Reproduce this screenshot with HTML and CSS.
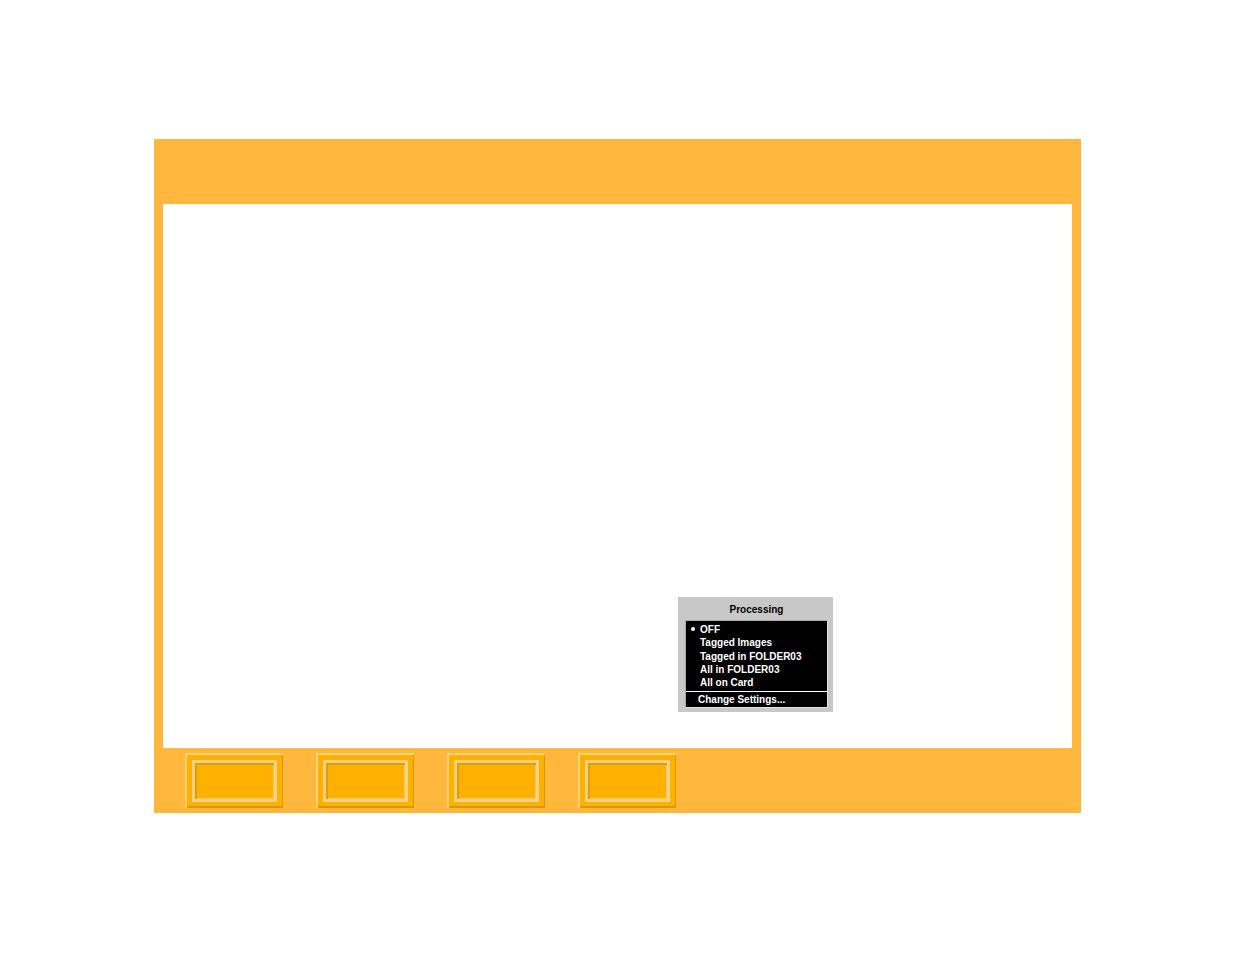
FILE: index.html
```html
<!DOCTYPE html>
<html>
<head>
<meta charset="utf-8">
<link rel="stylesheet" href="styles.css">
</head>
<body>
<div class="frame">
  <div class="header"></div>
  <div class="middle">
    <div class="side"></div>
    <div class="content">
      <div class="menu">
        <div class="menu-title">Processing</div>
        <div class="menu-box">
          <ul class="menu-list">
            <li class="selected">OFF</li>
            <li>Tagged Images</li>
            <li>Tagged in FOLDER03</li>
            <li>All in FOLDER03</li>
            <li>All on Card</li>
          </ul>
          <div class="menu-sep"></div>
          <div class="menu-action">Change Settings...</div>
        </div>
      </div>
    </div>
    <div class="side"></div>
  </div>
  <div class="footer">
    <div class="btn"><div class="btn-inner"></div></div>
    <div class="btn"><div class="btn-inner"></div></div>
    <div class="btn"><div class="btn-inner"></div></div>
    <div class="btn"><div class="btn-inner"></div></div>
  </div>
</div>
</body>
</html>
```

FILE: styles.css
```css
html, body {
  margin: 0;
  padding: 0;
  background: #ffffff;
}

body {
  padding-top: 139px;
  font-family: "Liberation Sans", Arial, sans-serif;
}

.frame {
  margin-left: 154px;
  width: 927px;
  background: #ffb83d;
}

.header {
  height: 65px;
}

.middle {
  display: flex;
  height: 544px;
}

.side {
  width: 9px;
  flex: none;
}

.content {
  flex: 1;
  background: #ffffff;
  padding: 393px 0 0 515px;
  box-sizing: border-box;
}

.menu {
  width: 155px;
  height: 115px;
  background: #c8c8c8;
  box-sizing: border-box;
  padding: 0 5px 4px 7px;
  display: flex;
  flex-direction: column;
}

.menu-title {
  height: 23px;
  line-height: 25px;
  text-align: center;
  font-size: 10px;
  font-weight: bold;
  color: #000000;
}

.menu-box {
  flex: 1;
  background: #000000;
  border: 1px solid #e2e2e2;
  border-top-color: #a8a8a8;
  border-left-color: #a8a8a8;
  color: #ffffff;
  font-size: 10px;
  font-weight: bold;
  display: flex;
  flex-direction: column;
}

.menu-list {
  list-style: none;
  margin: 0;
  padding: 2px 0 0 14px;
}

.menu-list li {
  height: 13.3px;
  line-height: 13.3px;
  position: relative;
}

.menu-list li.selected::before {
  content: "";
  position: absolute;
  left: -9px;
  top: 4px;
  width: 4px;
  height: 4px;
  border-radius: 50%;
  background: #ffffff;
}

.menu-sep {
  height: 1px;
  background: #ffffff;
  margin-top: 2px;
}

.menu-action {
  padding-left: 12px;
  line-height: 15px;
}

.footer {
  height: 65px;
  display: flex;
  gap: 33px;
  padding: 5px 0 0 31px;
  box-sizing: border-box;
}

.btn {
  width: 98px;
  height: 55px;
  background: #ffb000;
  box-sizing: border-box;
  padding: 7px 6px 6px 7px;
  box-shadow:
    inset 2px 2px 0 rgba(250, 220, 140, 0.8),
    inset -1px -2px 0 #d59b08;
}

.btn-inner {
  height: 100%;
  box-sizing: border-box;
  border: 3px solid #f2d07c;
  border-right-color: #f5d585;
  border-bottom-color: #f5d585;
  box-shadow: inset 2px 2px 0 #d6a214, inset -1px -1px 0 #f6c860;
}
```
